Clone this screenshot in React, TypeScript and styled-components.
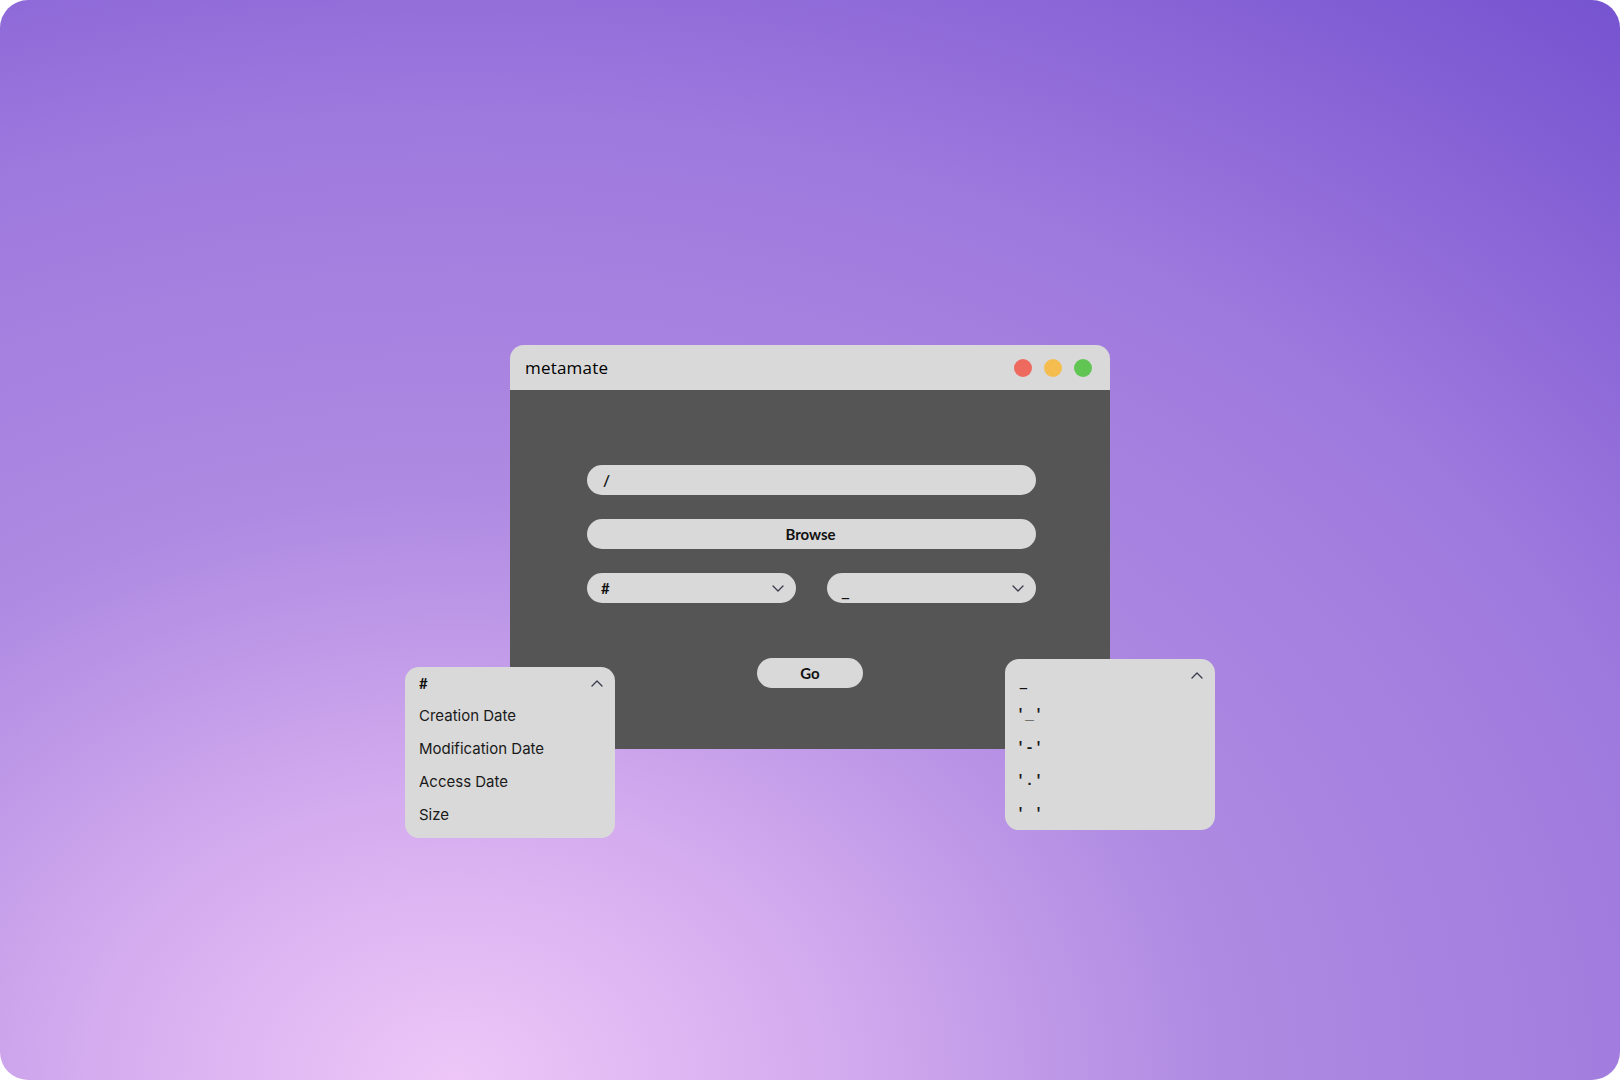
import styled, { createGlobalStyle } from 'styled-components'

const GlobalStyle = createGlobalStyle`
  html, body {
    margin: 0;
    padding: 0;
    background: #ffffff;
  }
  * {
    box-sizing: border-box;
  }
`

const sortOptions = ['Creation Date', 'Modification Date', 'Access Date', 'Size']
const separatorOptions = ["'_'", "'-'", "'.'", "' '"]

function Chevron({ up }: { up?: boolean }) {
  return (
    <svg width='12' height='7' viewBox='0 0 12 7' fill='none'>
      <polyline
        points={up ? '1,6 6,1 11,6' : '1,1 6,6 11,1'}
        stroke='#3a3a4c'
        strokeWidth='1.3'
        strokeLinecap='round'
        strokeLinejoin='round'
      />
    </svg>
  )
}

export default function App() {
  return (
    <>
      <GlobalStyle />
      <Page>
        <Window>
          <TitleBar>
            <Title>metamate</Title>
            <Lights>
              <Light $color='#ee6a5f' />
              <Light $color='#f5bd4f' />
              <Light $color='#61c554' />
            </Lights>
          </TitleBar>
          <Body>
            <PathField>/</PathField>
            <WideButton>Browse</WideButton>
            <SelectRow>
              <Select>
                <span>#</span>
                <Chevron />
              </Select>
              <Select>
                <LowLabel>_</LowLabel>
                <Chevron />
              </Select>
            </SelectRow>
            <GoButton>Go</GoButton>
          </Body>

          <Menu $left={-105} $top={322}>
            <MenuHeader>
              <span>#</span>
              <Chevron up />
            </MenuHeader>
            <MenuList>
              {sortOptions.map((o) => (
                <MenuItem key={o}>{o}</MenuItem>
              ))}
            </MenuList>
          </Menu>

          <Menu $left={495} $top={314}>
            <MenuHeader>
              <LowLabel $shift={11}>_</LowLabel>
              <Chevron up />
            </MenuHeader>
            <MenuList $gap={8}>
              {separatorOptions.map((o) => (
                <MonoItem key={o}>{o}</MonoItem>
              ))}
            </MenuList>
          </Menu>
        </Window>
      </Page>
    </>
  )
}

const Page = styled.div`
  width: 1620px;
  height: 1080px;
  border-radius: 28px;
  overflow: hidden;
  display: flex;
  flex-direction: column;
  align-items: center;
  padding-top: 345px;
  background: radial-gradient(
    ellipse 1832px 1400px at 455px 1080px,
    #eec7f8 0%,
    #d4acef 20%,
    #ae8ae2 42%,
    #9f7ade 68%,
    #8763d6 86%,
    #7653d0 100%
  );
`

const Window = styled.div`
  position: relative;
  width: 600px;
`

const TitleBar = styled.div`
  height: 45px;
  background: #d9d9d9;
  border-radius: 14px 14px 0 0;
  display: flex;
  align-items: center;
  justify-content: space-between;
  padding: 0 18px 0 15px;
`

const Title = styled.div`
  font-family: 'Open Sans', sans-serif;
  font-size: 17px;
  font-weight: 500;
  color: #000000;
  letter-spacing: 0.2px;
`

const Lights = styled.div`
  display: flex;
  gap: 12px;
`

const Light = styled.div<{ $color: string }>`
  width: 18px;
  height: 18px;
  border-radius: 50%;
  background: ${(p) => p.$color};
`

const Body = styled.div`
  height: 359px;
  background: #555555;
  padding: 75px 74px 0 77px;
  display: flex;
  flex-direction: column;
  gap: 24px;
`

const Pill = styled.div`
  height: 30px;
  border-radius: 15px;
  background: #d9d9d9;
  font-family: Lato, sans-serif;
  font-size: 15px;
  font-weight: 700;
  color: #111111;
  display: flex;
  align-items: center;
`

const PathField = styled(Pill)`
  padding: 0 16px;
`

const WideButton = styled(Pill)`
  justify-content: center;
  padding-right: 2px;
`

const SelectRow = styled.div`
  display: grid;
  grid-template-columns: 209px 209px;
  justify-content: space-between;
`

const Select = styled(Pill)`
  justify-content: space-between;
  padding: 0 12px 0 14px;
`

const LowLabel = styled.span<{ $shift?: number }>`
  padding-top: ${(p) => p.$shift ?? 6}px;
  display: inline-block;
  transform: scaleX(1.25);
  transform-origin: left center;
`

const GoButton = styled(Pill)`
  width: 106px;
  align-self: center;
  justify-content: center;
  margin-top: 31px;
  margin-right: 3px;
`

const Menu = styled.div<{ $left: number; $top: number }>`
  position: absolute;
  left: ${(p) => p.$left}px;
  top: ${(p) => p.$top}px;
  width: 210px;
  height: 171px;
  border-radius: 14px;
  background: #d9d9d9;
  padding: 0 12px 0 14px;
`

const MenuHeader = styled.div`
  height: 32px;
  display: flex;
  align-items: center;
  justify-content: space-between;
  font-family: Lato, sans-serif;
  font-size: 15px;
  font-weight: 700;
  color: #111111;
`

const MenuList = styled.div<{ $gap?: number }>`
  margin-top: ${(p) => p.$gap ?? 0}px;
  display: flex;
  flex-direction: column;
`

const MenuItem = styled.div`
  height: 33px;
  line-height: 33px;
  font-family: Inter, sans-serif;
  font-size: 15px;
  color: #1a1a1a;
  white-space: pre;
`

const MonoItem = styled(MenuItem)`
  font-family: 'Liberation Mono', monospace;
  font-weight: 700;
  margin-left: -3px;
`
